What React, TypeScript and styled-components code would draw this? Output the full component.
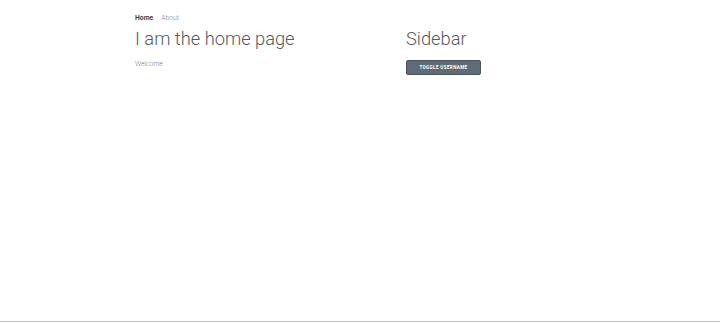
import React, { useState } from "react";
import styled, { createGlobalStyle } from "styled-components";

const GlobalStyle = createGlobalStyle`
  html, body {
    margin: 0;
    padding: 0;
    background: #ffffff;
    font-family: Roboto, "Liberation Sans", sans-serif;
  }
`;

const Page = styled.div`
  min-height: calc(100vh - 1px);
  border-bottom: 1px solid #c4c4c4;
  box-sizing: border-box;
`;

const Container = styled.div`
  width: 450px;
  margin: 0 auto;
  padding-top: 11px;
`;

const Nav = styled.nav`
  display: flex;
  gap: 8px;
  height: 13px;
  align-items: center;
`;

const NavLink = styled.a<{ $active?: boolean }>`
  font-size: 6.8px;
  font-weight: ${(p) => (p.$active ? 700 : 300)};
  color: ${(p) => (p.$active ? "#3a3f45" : "#7d8288")};
  text-decoration: none;
  cursor: pointer;
`;

const Columns = styled.div`
  display: grid;
  grid-template-columns: 271px 1fr;
`;

const Title = styled.h1`
  margin: 0;
  font-size: 18.3px;
  font-weight: 300;
  line-height: 30px;
  color: #545a61;
`;

const Text = styled.p`
  margin: 6px 0 0;
  font-size: 6.8px;
  font-weight: 300;
  color: #7a7f85;
`;

const Button = styled.button`
  margin-top: 5px;
  width: 75px;
  height: 15px;
  padding: 0;
  background: #5f6b75;
  border: 1px solid #4a545c;
  border-radius: 2px;
  color: #ffffff;
  font-family: Roboto, "Liberation Sans", sans-serif;
  font-size: 4.6px;
  font-weight: 700;
  letter-spacing: 0.35px;
  text-transform: uppercase;
  cursor: pointer;
`;

function App() {
  const [showName, setShowName] = useState(false);

  return (
    <Page>
      <GlobalStyle />
      <Container>
        <Nav>
          <NavLink $active>Home</NavLink>
          <NavLink>About</NavLink>
        </Nav>
        <Columns>
          <div>
            <Title>I am the home page</Title>
            <Text>{showName ? "Welcome, user" : "Welcome"}</Text>
          </div>
          <div>
            <Title>Sidebar</Title>
            <Button onClick={() => setShowName(!showName)}>Toggle username</Button>
          </div>
        </Columns>
      </Container>
    </Page>
  );
}

export default App;
